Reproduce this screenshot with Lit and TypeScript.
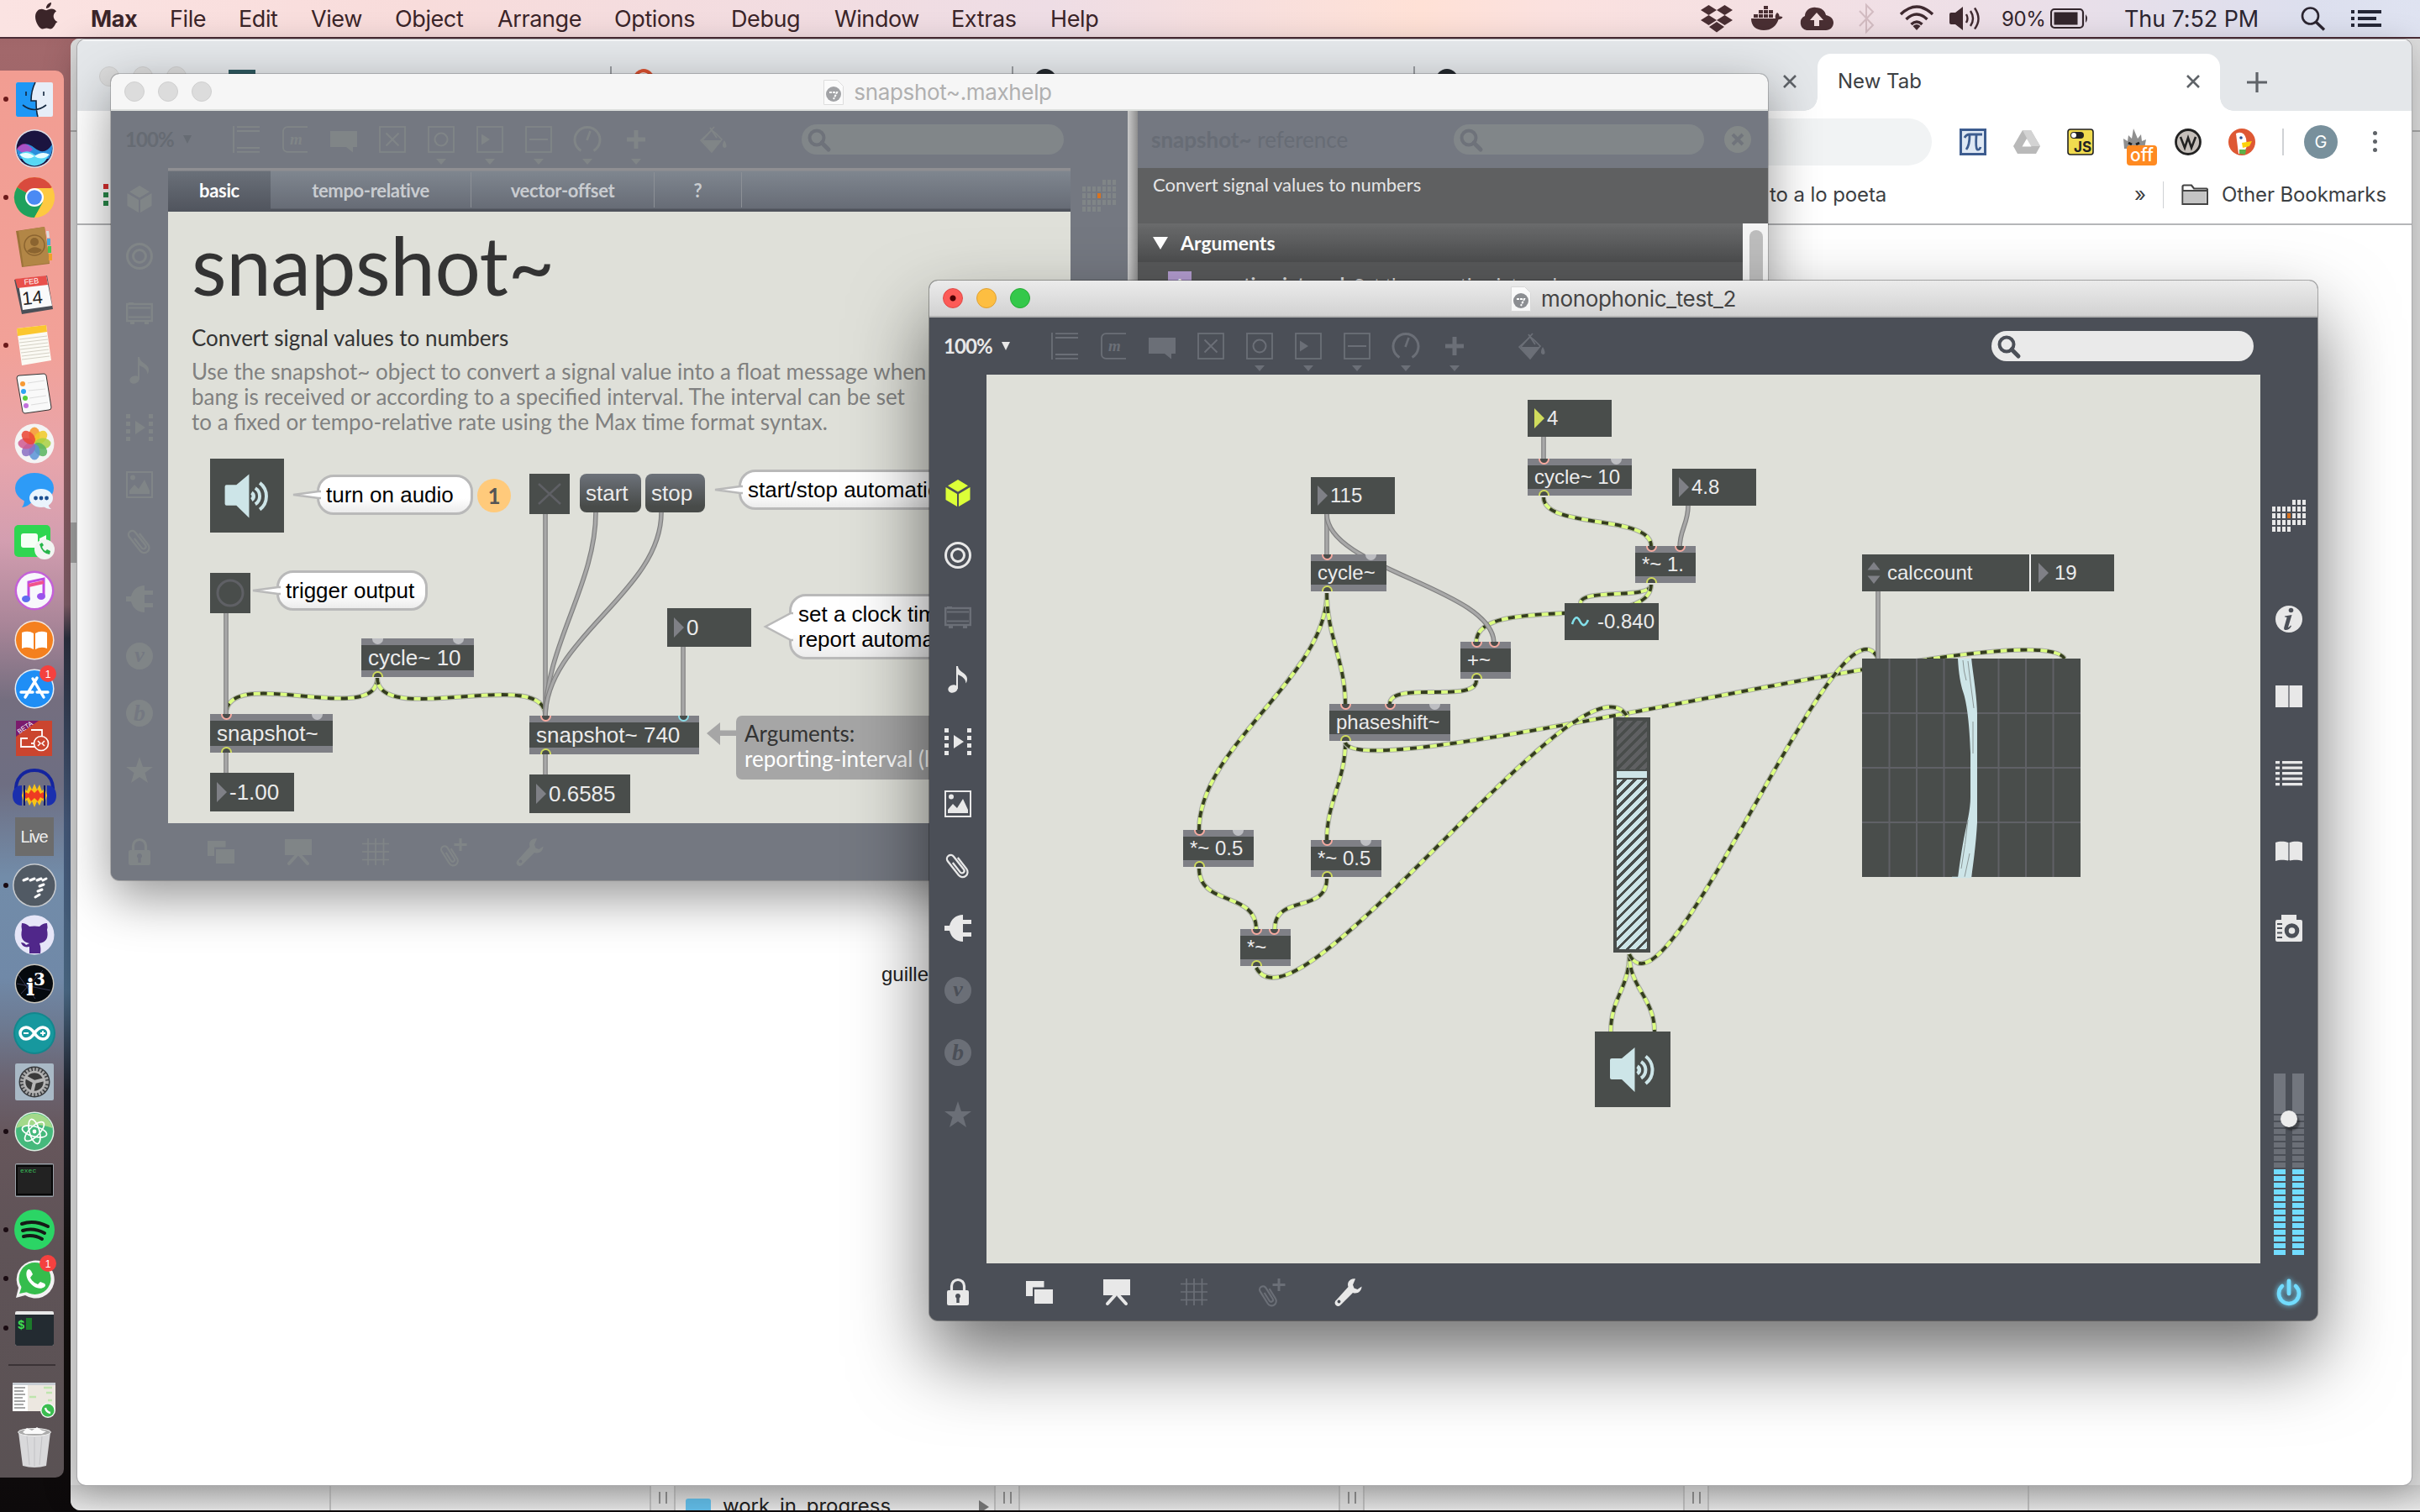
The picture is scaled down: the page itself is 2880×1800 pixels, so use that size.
import { LitElement, html, css, svg, nothing } from "lit";
import { styleMap } from "lit/directives/style-map.js";
import { classMap } from "lit/directives/class-map.js";

type Pt = [number, number];

/* ---------- toolbar glyphs, drawn on a 32 x 32 grid ---------- */

const frame = svg`<rect x="1" y="1" width="30" height="30" fill="none" stroke="currentColor" stroke-width="1.8"/>`;

const GLYPHS: Record<string, unknown> = {
  object: svg`<path d="M1 0v32M5 1.2h27M5 6h27M5 26h27M5 30.8h27" fill="none" stroke="currentColor" stroke-width="1.8"/>`,
  message: svg`<path d="M31 1.2H7a5 5 0 0 0-5 5v19.6a5 5 0 0 0 5 5h24" fill="none" stroke="currentColor" stroke-width="1.8"/>
    <text x="10" y="22" font-family="Liberation Serif, serif" font-style="italic" font-weight="700" font-size="19" fill="currentColor">m</text>`,
  comment: svg`<path d="M0 6h32v19h-5v6.500l-8-6.500H0z" fill="currentColor"/>`,
  toggle: svg`${frame}<path d="M8.500 8.500l15 15M23.500 8.500l-15 15" stroke="currentColor" stroke-width="2"/>`,
  button: svg`${frame}<circle cx="16" cy="16" r="7.500" fill="none" stroke="currentColor" stroke-width="2"/>`,
  number: svg`${frame}<path d="M6 9.500L16 16 6 22.500z" fill="currentColor"/>`,
  slider: svg`${frame}<path d="M5 16h22" stroke="currentColor" stroke-width="2"/>`,
  dial: svg`<path d="M8.500 29.500A15 15 0 1 1 23.500 29.500" fill="none" stroke="currentColor" stroke-width="3"/><path d="M15.500 17L19.500 6" stroke="currentColor" stroke-width="2.600"/>`,
  plus: svg`<path d="M16 5v22M5 16h22" stroke="currentColor" stroke-width="5"/>`,
  paint: svg`<path d="M12 2l8 12M17 1L3 17" fill="none" stroke="currentColor" stroke-width="1.800"/><path d="M1 17l13-12 4 3 8 8L14 31z" fill="none" stroke="currentColor" stroke-width="1.600"/><path d="M2 17h24L14 31z" fill="currentColor"/><path d="M29 17c3 5 3.500 9 .5 9s-3.500-4-.5-9z" fill="currentColor"/>`,
  cube: svg`<path d="M16 0l12 7.200L16 14.500 4 7.200zM1.500 9L15 17v15L1.500 24zM30.500 9L17 17v15l13.500-8z" fill="currentColor"/>`,
  target: svg`<circle cx="16" cy="16" r="14.500" fill="none" stroke="currentColor" stroke-width="3"/><circle cx="16" cy="16" r="7.500" fill="none" stroke="currentColor" stroke-width="3"/>`,
  device: svg`<rect x="1.200" y="5" width="29.600" height="20" fill="none" stroke="currentColor" stroke-width="2.400"/><path d="M3 9.500h26M3 20.500h26" stroke="currentColor" stroke-width="2"/><path d="M3 3h6v2H3zM5 26h5v3H5zM22 26h5v3h-5z" fill="currentColor"/>`,
  note: svg`<ellipse cx="10" cy="27" rx="5.800" ry="4.600" transform="rotate(-20 10 27)" fill="currentColor"/><path d="M14 27V0h2c0 7 11 8 11 15 0 2-.5 4-1.500 5.500C25.500 13 17 11 16 10v17z" fill="currentColor"/>`,
  steps: svg`<path d="M0 0h5v5H0zM0 9h5v5H0zM0 18h5v5H0zM0 27h5v5H0zM27 0h5v5h-5zM27 9h5v5h-5zM27 18h5v5h-5zM27 27h5v5h-5zM11 8l12 8-12 8z" fill="currentColor"/>`,
  image: svg`<rect x="1" y="1" width="30" height="30" fill="none" stroke="currentColor" stroke-width="2"/><circle cx="8" cy="7.500" r="3" fill="currentColor"/><path d="M4 27V23l6-7 5 5 7-11 6 13v4z" fill="currentColor"/>`,
  clip: svg`<g transform="rotate(-38 16 16)" fill="none" stroke="currentColor" stroke-width="2.300"><path d="M22 8v17a6 6 0 0 1-12 0V4a4.500 4.500 0 0 1 9 0V23.500a2.700 2.700 0 0 1-5.400 0V9"/></g>`,
  plug: svg`<path d="M0 13h6C8 5 14 0 22 0v6h10v5H22v10h10v5H22v6C14 32 8 27 6 19H0z" fill="currentColor"/>`,
  vizzie: svg`<circle cx="16" cy="16" r="16" fill="currentColor"/><text x="16" y="23" text-anchor="middle" class="cut" font-family="Liberation Serif, serif" font-style="italic" font-weight="700" font-size="26">v</text>`,
  beap: svg`<circle cx="16" cy="16" r="16" fill="currentColor"/><text x="16" y="25" text-anchor="middle" class="cut" font-family="Liberation Serif, serif" font-style="italic" font-weight="700" font-size="28">b</text>`,
  star: svg`<path d="M16 0l4 12h12l-9.500 7L26 31l-10-7-10 7 3.500-12L0 12h12z" fill="currentColor"/>`,
  lock: svg`<path d="M8.500 15V9a7.500 7.500 0 0 1 15 0v6" fill="none" stroke="currentColor" stroke-width="3.200"/><path d="M5 14h22a2 2 0 0 1 2 2v14a2 2 0 0 1-2 2H5a2 2 0 0 1-2-2V16a2 2 0 0 1 2-2z" fill="currentColor"/><path d="M16 18a3 3 0 0 1 1.700 5.500V29h-3.400v-5.500A3 3 0 0 1 16 18z" class="cut"/>`,
  windows: svg`<path d="M0 3h21.500v7.500H8V21H0z" fill="currentColor"/><path d="M10 13h22v17H10z" fill="currentColor"/>`,
  present: svg`<path d="M0 1h32v19H0z" fill="currentColor"/><path d="M14 20L5 30M18 20l9 10" stroke="currentColor" stroke-width="4" stroke-linecap="round"/>`,
  grid: svg`<path d="M7 0v32M16 0v32M25.500 0v32M0 6.500h32M0 16h32M0 25.500h32" stroke="currentColor" stroke-width="1.700"/>`,
  clipadd: svg`<g transform="translate(-4 3) rotate(-32 16 16)" fill="none" stroke="currentColor" stroke-width="2.100"><path d="M21 11v14a5.500 5.500 0 0 1-11 0V8a4 4 0 0 1 8 0V23.500a2.300 2.300 0 0 1-4.600 0V12"/></g><path d="M25 0v15M17.500 7.500h15" stroke="currentColor" stroke-width="3"/>`,
  wrench: svg`<path d="M24 .5c-6-1-10.500 4-8.500 9.500L1.500 25.500a4 4 0 1 0 5.500 5.500L21 17c5.500 2 10.500-2 10.500-7.500l-5 3.500-4-1.500-1.500-4z" fill="currentColor"/><circle cx="4.500" cy="27.500" r="1.900" class="cut"/>`,
  info: svg`<circle cx="16" cy="16" r="16" fill="currentColor"/><circle cx="18.500" cy="5.500" r="2.800" class="cut"/><path d="M11 12.500l8.500-1.500-4.500 15c.8 0 2-1 3-2.500l1 .7C17 28 14 29.500 11.500 29c-1.800-.5-1.500-2.500-1-4l3-10.500c.2-.8-1-1-2.500-1z" class="cut"/>`,
  columns: svg`<path d="M0 3h15v26H0zM17 3h15v26H17z" fill="currentColor"/><path d="M15 3h2v26h-2z" fill="currentColor" opacity=".4"/>`,
  list: svg`<path d="M0 1h5v3.200H0zM8 1h24v3.200H8zM0 7.500h5v3.200H0zM8 7.500h24v3.200H8zM0 14h5v3.200H0zM8 14h24v3.200H8zM0 20.500h5v3.200H0zM8 20.500h24v3.200H8zM0 27h5v3.200H0zM8 27h24v3.200H8z" fill="currentColor"/>`,
  book: svg`<path d="M0 6c4-1.800 11-1.800 15 0v21.500c-4-1-11-1-15 .5zM32 6c-4-1.800-11-1.800-15 0v21.500c4-1 11-1 15 .5z" fill="currentColor"/><path d="M15 6h2v21h-2z" fill="currentColor" opacity=".4"/>`,
  camera: svg`<path d="M7 0h18v6h5a2 2 0 0 1 2 2v22a2 2 0 0 1-2 2H2a2 2 0 0 1-2-2V8a2 2 0 0 1 2-2h5z" fill="currentColor"/><circle cx="19.500" cy="19" r="6.300" fill="none" class="cutline"/><path d="M2 11h6M2 16h6M2 21.500h6M2 27h6" class="cutline" style="stroke-width:2"/>`,
};

const glyph = (name: string, tone = "") =>
  html`<svg class="glyph ${tone}" viewBox="0 0 32 32">${GLYPHS[name]}</svg>`;

const speakerShape = svg`
  <path d="M18 34a2 2 0 0 1 2-2h12l15.500-13v53L32 57H20a2 2 0 0 1-2-2z" fill="#cde5e8"/>
  <g fill="none" stroke="#cde5e8" stroke-width="4">
    <path d="M50.500 41.500a5 5 0 0 1 0 8.600" stroke-width="4.500"/>
    <path d="M55 36a11.500 11.500 0 0 1 0 19.500"/>
    <path d="M60.500 29.500a20.500 20.500 0 0 1 0 32.500"/>
  </g>`;

/* ---------- patcher ---------- */

interface Port { x: number; kind: "hot" | "blue" | "free"; }
interface Node {
  kind: "object" | "number" | "signal-number" | "message" | "bubble" | "note" | "toggle" | "bang" | "speaker" | "gain" | "scope" | "attr" | "badge";
  x: number; y: number; w: number; h: number;
  text?: string; ins?: Port[]; outs?: number[]; lit?: boolean; tip?: number;
}
interface Cord { from: Pt; to: Pt; pull?: number; bend?: [Pt, Pt]; signal?: boolean; }

class PatchCanvas extends LitElement {
  static properties = {
    nodes: { attribute: false }, cords: { attribute: false },
    ox: { type: Number }, oy: { type: Number }, size: { type: Number },
  };
  declare nodes: Node[];
  declare cords: Cord[];
  declare ox: number;
  declare oy: number;
  declare size: number;

  constructor() {
    super();
    this.nodes = []; this.cords = []; this.ox = 0; this.oy = 0; this.size = 24;
  }

  static styles = css`
    :host { position: absolute; inset: 0; overflow: hidden; font-family: "Liberation Sans", Arial, sans-serif; }
    svg.cords { position: absolute; inset: 0; width: 100%; height: 100%; }
    .node { position: absolute; box-sizing: border-box; color: #ebebeb; white-space: pre; }
    .object { background: #494d4b; border: solid #7f8086; border-width: 8px 0; padding-left: 8px; display: flex; align-items: center; }
    .number, .signal-number { background: #494d4b; display: flex; align-items: center; padding-left: 8px; gap: 3px; }
    .signal-number { gap: 10px; }
    .tri { width: 0; height: 0; border: solid transparent; border-width: 12px 0 12px 12px; border-left-color: #7f8086; }
    .tri.lit { border-left-color: #d0dc5c; }
    .in, .out { position: absolute; width: 13px; height: 7px; box-sizing: border-box; background: #494d4b; border: 2px solid #f6aaa0; margin-left: -6.5px; }
    .in { top: -8px; border-top: 0; border-radius: 0 0 7px 7px; }
    .in.blue { border-color: #8adbe6; }
    .in.free { background: #bdbec2; border-color: #bdbec2; }
    .out { bottom: -8px; border-color: #d0dc5c; border-bottom: 0; border-radius: 7px 7px 0 0; }
    .message { background: linear-gradient(#6d727a, #484b49 85%); border-radius: 8px; display: flex; align-items: center; padding-left: 7px; }
    .bubble { background: linear-gradient(#fff 60%, #ececec); border: 3px solid #b9b9b9; border-radius: 20px; color: #000; padding-left: 8px; display: flex; align-items: center; line-height: 30px; }
    .bubble svg { position: absolute; right: 100%; top: 0; margin-right: -2px; }
    .note { background: #a6a6a6; border-radius: 7px; padding: 6px 10px; font: 26px/30px Lato, sans-serif; color: #fff; }
    .note .dark { color: #333; }
    .note svg { position: absolute; right: 100%; top: 8px; }
    .toggle, .bang, .speaker { background: #494d4b; }
    .toggle svg, .bang svg, .speaker svg { display: block; width: 100%; height: 100%; }
    .badge { background: #ffca7b; border-radius: 50%; color: #555; font: 700 26px Lato, sans-serif; display: flex; align-items: center; justify-content: center; }
    .gain { background: #494d4b; padding: 4px; display: flex; flex-direction: column; gap: 2px; }
    .gain .off { height: 58px; background: repeating-linear-gradient(135deg, #5f6062 0 5.500px, #494d4b 5.500px 8.500px); }
    .gain .knob { height: 8px; background: #cde5e8; }
    .gain .on { flex: 1; background: repeating-linear-gradient(135deg, #cde5e8 0 5.500px, #494d4b 5.500px 8.500px); }
    .attr { display: flex; gap: 2px; background: #f4f4f4; }
    .attr > div { background: #494d4b; display: flex; align-items: center; gap: 9px; padding-left: 6px; }
    .attr .name { width: 199px; box-sizing: border-box; gap: 8px; }
    .attr .value { flex: 1; padding-left: 9px; gap: 7px; }
    .scope { background: #494d4b; }
    .scope svg { display: block; overflow: visible; }
  `;

  private path(c: Cord) {
    const k = c.pull ?? 0;
    const [a, b] = c.bend ?? [[c.from[0], c.from[1] + k], [c.to[0], c.to[1] - k]] as [Pt, Pt];
    return `M${c.from}C${a} ${b} ${c.to}`;
  }

  private body(n: Node) {
    switch (n.kind) {
      case "object":
        return html`${(n.ins ?? []).map(p => html`<i class="in ${p.kind}" style=${styleMap({ left: `${p.x - n.x}px` })}></i>`)}${n.text}${(n.outs ?? []).map(x => html`<i class="out" style=${styleMap({ left: `${x - n.x}px` })}></i>`)}`;
      case "number":
        return html`<i class=${classMap({ tri: true, lit: !!n.lit })}></i>${n.text}`;
      case "signal-number":
        return html`<svg width="21" height="14" viewBox="0 0 21 14"><path d="M1 10C4 1 7 0 10 6s6 8 10-1" fill="none" stroke="#83e0ea" stroke-width="2.600"/></svg>${n.text}`;
      case "bubble": {
        const t = n.tip ?? 36, h = n.h > 60 ? 16 : 4, cy = n.h / 2 - 3;
        return html`<svg width=${t} height=${n.h} viewBox="0 0 ${t} ${n.h}"><path d="M${t} ${cy - h}H${t - 3}L3 ${cy}L${t - 3} ${cy + h}H${t}" fill="#fff" stroke="#b9b9b9" stroke-width="2.500"/></svg>${n.text}`;
      }
      case "note":
        return html`<svg width="35" height="28" viewBox="0 0 35 28"><path d="M0 13L16 0v9.500h19v6.500H16V27z" fill="#a6a6a6"/></svg><div class="dark">Arguments:</div><div>${n.text}</div>`;
      case "toggle":
        return html`<svg viewBox="0 0 48 48"><path d="M11 12l26 24M37 12L11 36" stroke="#5f6065" stroke-width="2.500"/></svg>`;
      case "bang":
        return html`<svg viewBox="0 0 48 48"><circle cx="24" cy="24" r="15" fill="none" stroke="#5f6065" stroke-width="3"/></svg>`;
      case "speaker":
        return html`<svg viewBox="0 0 90 90">${speakerShape}</svg>`;
      case "gain":
        return html`<div class="off"></div><div class="knob"></div><div class="on"></div>`;
      case "attr":
        return html`<div class="name"><svg width="16" height="28" viewBox="0 0 16 28"><path d="M8 1l7.500 9.500H.5zM8 27l7.500-9.500H.5z" fill="#7f8086"/></svg>${n.text}</div><div class="value"><i class="tri"></i>19</div>`;
      case "scope":
        return html`<svg width="260" height="260" viewBox="0 0 260 260">
          <path d=${[1, 2, 3, 4, 5, 6, 7].map(i => `M${i * 32.5} 0v260`).join("") + [1, 2, 3].map(i => `M0 ${i * 65}h260`).join("")} stroke="#606166" stroke-width="2"/>
          <path d="M114 0H130C133 24 137 48 137 66V195C136 215 133 240 130 261H114C116 245 118 232 121 215 125 195 129 180 129 165V112C128 80 125 55 121 42 117 30 115 18 114 0z" fill="#cde5e8"/>
          <path d="M120 2q1 14 4 24M126 3q3 26 7 56M132 75v38M126 192q-3 30-8 58M128 232l-6 28" fill="none" stroke="#8b9696" stroke-width="1"/>
          <path d="M107 260.500h22" stroke="#cde5e8" stroke-width="1.500"/>
        </svg>`;
      default:
        return n.text ?? nothing;
    }
  }

  render() {
    return html`
      <svg class="cords" viewBox=${`${this.ox} ${this.oy} ${this.clientWidth || 1} ${this.clientHeight || 1}`} preserveAspectRatio="none">
        ${this.cords.map(c => c.signal
          ? svg`<g fill="none"><path d=${this.path(c)} stroke="#a9aba6" stroke-width="6"/><path d=${this.path(c)} stroke="#dcff80" stroke-width="3.800"/><path d=${this.path(c)} stroke="#343c20" stroke-width="3.800" stroke-dasharray="8 8"/></g>`
          : svg`<g fill="none"><path d=${this.path(c)} stroke="#808080" stroke-width="5.600"/><path d=${this.path(c)} stroke="#a8a8a8" stroke-width="3.200"/></g>`)}
      </svg>
      ${this.nodes.map(n => html`<div class="node ${n.kind}" style=${styleMap({
        left: `${n.x - this.ox}px`, top: `${n.y - this.oy}px`, width: `${n.w}px`, height: `${n.h}px`,
        ...(n.kind === "note" || n.kind === "badge" ? {} : { fontSize: `${this.size}px` }),
      })}>${this.body(n)}</div>`)}`;
  }

  firstUpdated() { this.requestUpdate(); }
}
customElements.define("patch-canvas", PatchCanvas);

const hot = (x: number): Port => ({ x, kind: "hot" });
const free = (x: number): Port => ({ x, kind: "free" });

const MAIN_NODES: Node[] = [
  { kind: "number", x: 1818, y: 476, w: 100, h: 44, text: "4", lit: true },
  { kind: "object", x: 1818, y: 546, w: 124, h: 44, text: "cycle~ 10", ins: [hot(1837), free(1923)], outs: [1837] },
  { kind: "number", x: 1990, y: 558, w: 100, h: 44, text: "4.8" },
  { kind: "number", x: 1560, y: 568, w: 100, h: 44, text: "115" },
  { kind: "object", x: 1560, y: 660, w: 90, h: 44, text: "cycle~", ins: [hot(1579), free(1631)], outs: [1579] },
  { kind: "object", x: 1946, y: 650, w: 72, h: 44, text: "*~ 1.", ins: [hot(1965), hot(1999)], outs: [1965] },
  { kind: "signal-number", x: 1862, y: 718, w: 112, h: 44, text: "-0.840" },
  { kind: "object", x: 1738, y: 764, w: 60, h: 44, text: "+~", ins: [hot(1757), hot(1778)], outs: [1757] },
  { kind: "object", x: 1582, y: 838, w: 144, h: 44, text: "phaseshift~", ins: [hot(1601), hot(1654), free(1707)], outs: [1601] },
  { kind: "object", x: 1408, y: 988, w: 84, h: 44, text: "*~ 0.5", ins: [hot(1427), free(1473)], outs: [1427] },
  { kind: "object", x: 1560, y: 1000, w: 84, h: 44, text: "*~ 0.5", ins: [hot(1579), free(1625)], outs: [1579] },
  { kind: "object", x: 1476, y: 1106, w: 60, h: 44, text: "*~", ins: [hot(1495), hot(1516)], outs: [1495] },
  { kind: "gain", x: 1920, y: 854, w: 44, h: 280 },
  { kind: "speaker", x: 1898, y: 1228, w: 90, h: 90 },
  { kind: "attr", x: 2216, y: 660, w: 300, h: 44, text: "calccount" },
  { kind: "scope", x: 2216, y: 784, w: 260, h: 260 },
];

const MAIN_CORDS: Cord[] = [
  { from: [1837, 520], to: [1837, 548] },
  { from: [1579, 612], to: [1579, 662] },
  { from: [1837, 592], to: [1965, 650], pull: 38, signal: true },
  { from: [1965, 696], to: [1881, 718], pull: 18, signal: true },
  { from: [1965, 696], to: [1757, 764], pull: 58, signal: true },
  { from: [1757, 810], to: [1654, 838], pull: 28, signal: true },
  { from: [1579, 706], to: [1427, 988], pull: 100, signal: true },
  { from: [1579, 706], to: [1601, 838], pull: 50, signal: true },
  { from: [1601, 884], to: [1579, 1000], pull: 45, signal: true },
  { from: [1601, 884], to: [2457, 784], bend: [[1620, 940], [2420, 725]], signal: true },
  { from: [1427, 1034], to: [1495, 1106], pull: 45, signal: true },
  { from: [1579, 1046], to: [1517, 1106], pull: 42, signal: true },
  { from: [1495, 1152], to: [1937, 854], bend: [[1545, 1245], [1887, 759]], signal: true },
  { from: [1939, 1136], to: [1917, 1228], pull: 40, signal: true },
  { from: [1939, 1136], to: [1969, 1228], pull: 40, signal: true },
  { from: [1939, 1136], to: [2235, 784], bend: [[1985, 1230], [2190, 690]], signal: true },
  { from: [2009, 602], to: [1999, 652], pull: 22 },
  { from: [1579, 612], to: [1778, 766], pull: 65 },
  { from: [2235, 704], to: [2235, 786] },
];

const HELP_NODES: Node[] = [
  { kind: "speaker", x: 250, y: 546, w: 88, h: 88 },
  { kind: "bubble", x: 377, y: 565, w: 186, h: 48, text: "turn on audio" },
  { kind: "badge", x: 568, y: 570, w: 40, h: 40, text: "1" },
  { kind: "toggle", x: 630, y: 564, w: 48, h: 48 },
  { kind: "message", x: 690, y: 564, w: 73, h: 46, text: "start" },
  { kind: "message", x: 768, y: 564, w: 71, h: 46, text: "stop" },
  { kind: "bubble", x: 879, y: 559, w: 500, h: 48, text: "start/stop automatic reporting" },
  { kind: "bang", x: 250, y: 682, w: 48, h: 48 },
  { kind: "bubble", x: 329, y: 679, w: 180, h: 48, text: "trigger output" },
  { kind: "number", x: 794, y: 724, w: 100, h: 46, text: "0" },
  { kind: "bubble", x: 939, y: 707, w: 500, h: 78, text: "set a clock time to\nreport automatically" },
  { kind: "object", x: 430, y: 760, w: 134, h: 46, text: "cycle~ 10", ins: [free(449), free(545)], outs: [449] },
  { kind: "object", x: 250, y: 850, w: 146, h: 46, text: "snapshot~", ins: [hot(269), free(377)], outs: [269] },
  { kind: "object", x: 630, y: 852, w: 202, h: 46, text: "snapshot~ 740", ins: [hot(649), { x: 813, kind: "blue" }], outs: [649] },
  { kind: "number", x: 250, y: 920, w: 100, h: 46, text: "-1.00" },
  { kind: "number", x: 630, y: 922, w: 120, h: 46, text: "0.6585" },
  { kind: "note", x: 876, y: 852, w: 500, h: 76, text: "reporting-interval (long)" },
];

const HELP_CORDS: Cord[] = [
  { from: [449, 807], to: [269, 850], pull: 60, signal: true },
  { from: [449, 807], to: [649, 852], pull: 60, signal: true },
  { from: [269, 730], to: [269, 852] },
  { from: [649, 612], to: [649, 854] },
  { from: [709, 610], to: [649, 854], pull: 85 },
  { from: [787, 610], to: [649, 854], pull: 95 },
  { from: [813, 770], to: [813, 854] },
  { from: [269, 896], to: [269, 920] },
  { from: [649, 898], to: [649, 922] },
];

/* ---------- dock ---------- */

const badge = svg`<circle cx="40" cy="6" r="10" fill="#f4413f"/><text x="40" y="10.500" font-size="12" fill="#fff" text-anchor="middle">1</text>`;

const DOCK: { art: unknown; open?: boolean }[] = [
  { open: true, art: svg`<rect x="2" y="4" width="44" height="41" rx="2" fill="#e6eef8"/><path d="M2 6a2 2 0 0 1 2-2h21c-4 8-5 14-5 22h6c0 7 0 13 2 19H4a2 2 0 0 1-2-2z" fill="#1e97f5"/><path d="M14 15v5M35 15v5M10 31q14 11 28 0M25 4c-4 8-5 14-5 22h6c0 7 0 13 2 19" fill="none" stroke="#12263e" stroke-width="1.600"/>` },
  { art: svg`<circle cx="24" cy="24" r="23" fill="#dcdfe8"/><circle cx="24" cy="24" r="21.500" fill="#1b1440"/><path d="M3 25q9-12 21-2t21-4q1 10-4 17H7q-4-5-4-11z" fill="#2b8fdc"/><path d="M3 24q9-12 19 1-9 9-19-1z" fill="#d33fc0" opacity=".75"/><path d="M7 30q8-6 17 1t17-1q-3 13-17 14.500Q10 43 7 30z" fill="#59d7f4"/><path d="M6 31q9-5 18 2-9 6-18-2zM24 33q9-7 18-2-9 8-18 2z" fill="#e6fdff"/>` },
  { open: true, art: svg`<circle cx="24" cy="24" r="24" fill="#fdc941"/><path d="M24 24L3.200 12A24 24 0 0 1 44.800 12z" fill="#d94a3d"/><path d="M24 24L3.200 12A24 24 0 0 0 24 48l10-18z" fill="#1fa15d"/><path d="M24 13h21A24 24 0 0 1 24 48l10-18z" fill="#fdc941"/><circle cx="24" cy="24" r="11" fill="#fff"/><circle cx="24" cy="24" r="8.800" fill="#4a8af4"/>` },
  { art: svg`<path d="M2 5l34-5 6 44-33 4z" fill="#9c7339"/><path d="M5 5l31-5 6 43-31 4z" fill="#b28646"/><circle cx="24" cy="22" r="12" fill="none" stroke="#8b6430" stroke-width="1.500"/><circle cx="24" cy="18" r="5" fill="#8b6430"/><path d="M15 29q9-9 18-1-8 7-18 1z" fill="#8b6430"/><path d="M38 5l3 0 1 8-3 0z" fill="#ddd"/><path d="M39 14h4v8h-4z" fill="#4aa9de"/><path d="M40 23h4v8h-4z" fill="#45c554"/><path d="M41 32h4v8h-4z" fill="#f1a02c"/>` },
  { art: svg`<path d="M0 5l39-5 7 40-37 6z" fill="#4b4f57"/><path d="M4 4l34-4 7 36-35 5z" fill="#fafafa"/><path d="M1 4l37-4 2 11-36 4z" fill="#e8504b"/><text x="12" y="11" font-size="9" fill="#fff" transform="rotate(-6 12 11)">FEB</text><text x="10" y="35" font-size="22" fill="#222" transform="rotate(-6 12 35)">14</text>` },
  { open: true, art: svg`<path d="M3 4l35-4 6 42-35 6z" fill="#fbfaf4"/><path d="M3 4l35-4 1 8-35 5z" fill="#fbc72f"/><path d="M6 17l33-4M6 21l34-4M7 25l33-4M7 29l34-4M8 33l33-4M9 37l33-4M9 41l33-4" stroke="#cfccc0" stroke-width=".9"/>` },
  { art: svg`<path d="M3 5a3 3 0 0 1 3-3l29-2a3 3 0 0 1 3 2l6 38a3 3 0 0 1-3 3L13 47a3 3 0 0 1-3-2z" fill="#f9f9f9" stroke="#333" stroke-width="1"/><path d="M16 11l20-3M17 20l20-2M18 29l20-3M20 37l20-3" stroke="#ddd"/><circle cx="10" cy="12" r="3" fill="#f79a35"/><circle cx="11" cy="21" r="3" fill="#2ea4f3"/><circle cx="13" cy="29" r="3" fill="#58cf3c"/><circle cx="14" cy="38" r="3" fill="#c26fdc"/>` },
  { art: svg`<circle cx="24" cy="24" r="23.500" fill="#f4f4f4"/>${["#f6952a", "#f0c928", "#a9d142", "#58b45f", "#5b93d6", "#8a6fc2", "#cf5a90", "#ea4634"].map((c, i) => svg`<ellipse cx="24" cy="14" rx="6.500" ry="9.500" fill=${c} opacity=".86" transform="rotate(${i * 45} 24 24)"/>`)}` },
  { art: svg`<ellipse cx="24" cy="19" rx="23" ry="18" fill="#2d9bf7"/><path d="M12 32q0 7-3 10 8-1 12-7z" fill="#2d9bf7"/><ellipse cx="32" cy="31" rx="14" ry="11" fill="#eaf4fd"/><path d="M40 38q1 4 4 6-6 0-9-3z" fill="#eaf4fd"/><circle cx="25.500" cy="31" r="2.400" fill="#1d4f91"/><circle cx="32" cy="31" r="2.400" fill="#1d4f91"/><circle cx="38.500" cy="31" r="2.400" fill="#1d4f91"/>` },
  { art: svg`<rect x="0" y="4" width="43" height="38" rx="5" fill="#2fd651"/><rect x="8" y="14" width="20" height="17" rx="3" fill="#f5fff5"/><path d="M30 20l8-4v14l-8-4z" fill="#f5fff5"/><circle cx="36" cy="33" r="12" fill="#f2f5f2"/><path d="M30 27q3 11 12 12l1-4-4-2-2 2q-3-2-4-5l2-2-2-3z" fill="#28b54b"/>` },
  { art: svg`<circle cx="24" cy="24" r="23.500" fill="#c461d8"/><circle cx="24" cy="24" r="21" fill="#f8f8fc"/><path d="M17 34V14l18-4v20" fill="none" stroke="#c04ae0" stroke-width="3"/><path d="M17 18l18-4" stroke="#f0538c" stroke-width="4"/><ellipse cx="14" cy="34" rx="5" ry="4" fill="#5f6df0"/><ellipse cx="32" cy="31" rx="5" ry="4" fill="#9a54ec"/>` },
  { art: svg`<circle cx="24" cy="24" r="23.500" fill="#f5e8df"/><circle cx="24" cy="24" r="22" fill="#f4801f"/><path d="M9 15q8-3 14 1v19q-7-4-14-1zM39 15q-8-3-14 1v19q7-4 14-1z" fill="#fff"/>` },
  { art: svg`<circle cx="24" cy="24" r="23.500" fill="#e5eef6"/><circle cx="24" cy="24" r="22" fill="#1f8ef5"/><path d="M13 34L27 11M35 34L22 12M8 28h14M27 28h13" stroke="#fff" stroke-width="3.400" stroke-linecap="round"/>${badge}` },
  { art: svg`<rect x="2" y="3" width="43" height="42" fill="#cb452f"/><path d="M2 3h27L2 22z" fill="#7b1b6c"/><text x="6" y="19" font-size="8" fill="#fff" transform="rotate(-35 6 19)">BETA</text><path d="M15 34H8V24h8M20 14h13v8M20 30h7M10 34h17" fill="none" stroke="#fff" stroke-width="1.800"/><circle cx="32" cy="30" r="8.500" fill="#cb452f" stroke="#fff" stroke-width="1.600"/><path d="M28 27l3 3-3 3M36 27l-3 3 3 3" fill="none" stroke="#fff" stroke-width="1.500"/>` },
  { art: svg`<path d="M2 32C0 12 12 4 24 4s24 8 22 28" fill="none" stroke="#14249e" stroke-width="4"/><path d="M9 34l3-9 3 4 3-8 3 6 3-7 3 7 3-6 3 8 3-4 3 9-3 9-3-4-3 7-3-5-3 7-3-7-3 5-3-7-3 4z" fill="#f9c316"/><path d="M11 34l3-4 3 2 3-5 4 4 4-4 3 5 3-2 3 4-3 4-3-2-3 5-4-4-4 4-3-5-3 2z" fill="#ee3b22"/><path d="M9 22v24C1 46-2 40-2 34s3-12 11-12zM39 22v24c8 0 11-6 11-12s-3-12-11-12z" fill="#1a2fae"/><path d="M12 22v24M36 22v24" stroke="#0c1766" stroke-width="2"/>` },
  { art: svg`<rect x="1" y="1" width="46" height="46" fill="#6c6c6c"/><text x="24" y="31" font-size="20" fill="#eee" text-anchor="middle" textLength="33">Live</text>` },
  { open: true, art: svg`<circle cx="24" cy="24" r="26" fill="#c9ccd0"/><circle cx="24" cy="24" r="24.500" fill="#515a64"/><path d="M11 18l5-2M19 18l5-2M27 18l5-2M34 18l4-2M30 25l5-2M28 31l5-2M25 38l5-3" stroke="#fff" stroke-width="3" stroke-linecap="round"/>` },
  { art: svg`<circle cx="24" cy="24" r="23.500" fill="#e6e6f8"/><path d="M9 10q5 0 9 4 6-1 12 0 4-4 9-4 1 5 0 8 3 14-9 16 2 5 1 12H18V38q-8 2-10-5 4 0 6 3l4-2Q6 32 9 18q-1-4 0-8z" fill="#50278a"/>` },
  { art: svg`<circle cx="24" cy="24" r="23.500" fill="#c9c6be"/><circle cx="24" cy="24" r="22" fill="#060a0e"/><path d="M5 14l20 28M8 36L34 8M3 24l40 8" stroke="#446" stroke-width=".8"/><text x="14" y="38" font-family="DejaVu Serif, serif" font-size="27" font-weight="700" fill="#fff">i</text><text x="23" y="26" font-family="DejaVu Serif, serif" font-size="20" font-weight="700" fill="#fff">3</text>` },
  { art: svg`<circle cx="24" cy="24" r="25" fill="#12878d"/><circle cx="24" cy="24" r="23" fill="#17989e"/><path d="M24 24c-4-6-7-7-10-7a7 7 0 0 0 0 14c3 0 6-1 10-7s7-7 10-7a7 7 0 0 1 0 14c-3 0-6-1-10-7z" fill="none" stroke="#fff" stroke-width="3.600"/><path d="M11 24h6M31 24h6M34 21v6" stroke="#fff" stroke-width="1.800"/>` },
  { art: svg`<rect x="1" y="2" width="46" height="44" rx="2" fill="#a9b9c6"/><circle cx="24" cy="24" r="18.500" fill="#36383b"/><circle cx="24" cy="24" r="15" fill="none" stroke="#a5a5a5" stroke-width="4" stroke-dasharray="2.600 1.400"/><circle cx="24" cy="24" r="12" fill="#3a3a3a" stroke="#b5b5b5" stroke-width="2.600"/><path d="M24 24L13 18M24 24l12-3M24 24l-3 13" stroke="#b5b5b5" stroke-width="4"/>` },
  { open: true, art: svg`<circle cx="24" cy="24" r="23.500" fill="#dcefe2"/><circle cx="24" cy="24" r="22" fill="#45b97c"/><path d="M2.500 20a22 22 0 0 1 43 0q-21-8-43 0z" fill="#a3d98a"/><g fill="none" stroke="#fff" stroke-width="1.700"><ellipse cx="24" cy="24" rx="15" ry="6" transform="rotate(15 24 24)"/><ellipse cx="24" cy="24" rx="15" ry="6" transform="rotate(75 24 24)"/><ellipse cx="24" cy="24" rx="15" ry="6" transform="rotate(135 24 24)"/></g><circle cx="24" cy="24" r="2.400" fill="#fff"/>` },
  { art: svg`<rect x="1" y="4" width="46" height="40" rx="2" fill="#9aa1a8"/><rect x="2" y="5.500" width="44" height="37" fill="#060606"/><rect x="4" y="8" width="40" height="32" fill="#222"/><text x="7" y="15" font-size="8" fill="#38c05a" font-family="Liberation Mono, monospace">exec</text>` },
  { open: true, art: svg`<circle cx="24" cy="24" r="24" fill="#2bd565"/><path d="M9 17q15-5 31 3M10 25q13-4 26 3M11 32q12-3 22 3" fill="none" stroke="#151a17" stroke-width="4" stroke-linecap="round"/>` },
  { open: true, art: svg`<path d="M2 47l3-12A22.500 22.500 0 1 1 13 44z" fill="#f2f2f2"/><circle cx="24.500" cy="24" r="19" fill="#35bd4c"/><path d="M6 42l3-9 7 7z" fill="#35bd4c"/><path d="M15 15q2-4 5 0l2 4-3 4q3 6 9 8l3-3 5 2q2 2 0 4c-9 7-25-8-21-19z" fill="#fff"/>${badge}` },
  { open: true, art: svg`<rect x="1" y="4" width="46" height="41" rx="2" fill="#e8e8e8"/><path d="M1 8h46v35a2 2 0 0 1-2 2H3a2 2 0 0 1-2-2z" fill="#232b31"/><text x="4" y="25" font-size="14" font-weight="700" fill="#3fe052" font-family="Liberation Mono, monospace">$</text><rect x="14" y="12" width="7" height="14" fill="#1c7a2b"/>` },
];

/* ---------- desktop ---------- */

const TOOLS: [string, boolean][] = [
  ["object", false], ["message", false], ["comment", false], ["toggle", false], ["button", true],
  ["number", true], ["slider", true], ["dial", true], ["plus", true],
];
const LEFT = ["cube", "target", "device", "note", "steps", "image", "clip", "plug", "vizzie", "beap", "star"];
const DIM_LEFT = new Set(["device", "vizzie", "beap", "star"]);
const BOTTOM = ["lock", "windows", "present", "grid", "clipadd", "wrench"];

const launchpad = () => {
  const cells: unknown[] = [];
  for (let r = 0; r < 5; r++)
    for (let c = 0; c < 7; c++) {
      if ((r === 0 && c < 4) || (r === 4 && c > 3)) continue;
      cells.push(svg`<rect x=${c * 6} y=${r * 8} width="4" height="6" fill=${r === 2 && c === 3 ? "#d97320" : "currentColor"}/>`);
    }
  return html`<svg class="pad" viewBox="0 0 40 38">${cells}</svg>`;
};

const magnifier = html`<svg class="mag" viewBox="0 0 30 30"><circle cx="12" cy="12" r="8.500" fill="none" stroke="currentColor" stroke-width="4"/><path d="M18 18l8 8" stroke="currentColor" stroke-width="5" stroke-linecap="round"/></svg>`;

const fileIcon = html`<svg class="file" viewBox="0 0 24 30"><path d="M.5.500h16l7 7v22H.5z" fill="#fff" fill-opacity=".8" stroke="#d8d8d8"/><circle cx="12" cy="17" r="9" fill="#8c8e92"/><path d="M7 15h9l-4 8" fill="none" stroke="#fff" stroke-width="2" stroke-dasharray="3 1"/></svg>`;

class AppRoot extends LitElement {
  static styles = css`
    :host { display: block; position: relative; width: 2880px; height: 1800px; overflow: hidden; font-family: Inter, "Liberation Sans", sans-serif; color: #222;
      background: linear-gradient(#9a5f62 0, #a2686b 60px, #8d5a5e 500px, #7d5c66 720px, #2c303e 760px, #45597a 980px, #4b6985 1180px, #20222c 1300px, #15110f 1500px, #0d0a0b 1800px); }
    .menubar { height: 44px; display: flex; position: relative; justify-content: space-between; border-bottom: 2px solid #4b2d36; font-size: 27px; line-height: 46px; color: #3b2529; letter-spacing: -0.4px;
      background: linear-gradient(90deg, #fbe3e2 0, #f8dcdb 500px, #eedde5 1250px, #f8dfdd 1500px, #ffe1d6 1690px, #fbe1df 1850px, #ecdfe8 2400px, #dcdfee 2750px, #dfe3f1); }
    .menubar svg { display: block; }
    .menus { display: grid; grid-template-columns: 67px 94px 82px 86px 100px 122px 139px 139px 123px 139px 118px 100px; padding-left: 41px; }
    .menus b { font-weight: 700; }
    .status { display: grid; grid-template-columns: 60px 57px 71px 48px 60px 62px 58px 88px 210px 60px 82px; color: #33262d; align-items: center; }
    .status > * { height: 44px; }
    .status .level { font-size: 24px; }
    .status .clock { color: #2b2530; letter-spacing: -0.1px; }
    .win { position: absolute; overflow: visible; }

    .finder { left: 84px; top: 46px; width: 2810px; height: 1752px; background: #dcdcdc; border-radius: 10px 10px 10px 12px; display: flex; flex-direction: column; justify-content: space-between; overflow: hidden; }
    .finder .top { height: 109px; border-bottom: 2px solid #a8a8a8; background: #dedede; }
    .finder .track { width: 8px; margin-top: 465px; height: 48px; background: #a5a5a5; }
    .finder .cols { height: 30px; margin-top: auto; display: flex; background: linear-gradient(#cbcbcb, #e6e6e6); font-size: 24px; color: #222; overflow: hidden; }
    .finder .cols > div { width: 381px; flex: none; box-sizing: border-box; border-right: 2px solid #bdbdbd; display: flex; overflow: hidden; }
    .finder .cols > .lead { width: 310px; }
    .finder .cols > .handle { width: 29px; justify-content: center; gap: 6px; background: #dcdcdc; }
    .handle i { width: 2px; height: 14px; margin-top: 8px; background: #8f8f8f; }
    .folder-row { padding: 10px 0 0 12px; display: flex; flex: 1; gap: 14px; line-height: 30px; }
    .folder-row i { width: 30px; height: 24px; margin-top: 6px; background: #62bde8; border-radius: 3px; }
    .folder-row b { margin: 8px 6px 0 auto; border: solid transparent; border-width: 8px 0 8px 12px; border-left-color: #777; height: 0; }

    .chrome { left: 92px; top: 47px; width: 2778px; height: 1721px; border-radius: 10px; background: #fff; box-shadow: 0 0 0 1px #a9a9ab, 0 10px 40px rgba(0, 0, 0, .25); display: flex; flex-direction: column; overflow: hidden; }
    .strip { height: 85px; background: #e4e7ea; display: flex; position: relative; box-shadow: inset 0 2px #f4f5f6; }
    .lights { display: flex; gap: 16px; }
    .lights i { width: 24px; height: 24px; border-radius: 50%; box-sizing: border-box; background: #dcdcdc; border: 1.500px solid #cfcfcf; }
    .strip .lights { margin: 32px 0 0 26px; }
    .favs { position: absolute; left: 180px; top: 32px; }
    .strip .x { margin: 41px 0 0 1899px; }
    .tab { margin: 17px 0 0 24px; width: 479px; height: 68px; background: #fff; border-radius: 16px 16px 0 0; display: flex; align-items: center; justify-content: space-between; box-sizing: border-box; padding: 0 23px 3px 24px; font-size: 24px; color: #3c4043; position: relative; }
    .tab::before, .tab::after { content: ""; position: absolute; bottom: 0; width: 16px; height: 16px; }
    .tab::before { left: -16px; background: radial-gradient(circle at 0 0, transparent 15.500px, #fff 16px); }
    .tab::after { right: -16px; background: radial-gradient(circle at 100% 0, transparent 15.500px, #fff 16px); }
    .strip .add { margin: 39px 0 0 32px; }
    .addr { height: 73px; display: flex; align-items: center; position: relative; }
    .addr .omni { margin-left: 140px; width: 2067px; height: 56px; border-radius: 28px; background: #f1f3f4; }
    .addr .ext { margin-left: 33px; display: flex; gap: 32px; margin-top: 1px; }
    .addr .ext svg { width: 32px; height: 32px; overflow: visible; }
    .addr .bar { width: 2px; height: 32px; background: #d0d2d5; margin: 0 24px 0 32px; }
    .avatar { width: 40px; height: 40px; border-radius: 50%; background: #78909c; color: #fff; font-size: 20px; line-height: 40px; text-align: center; }
    .dots { display: flex; flex-direction: column; gap: 5px; margin-left: 42px; }
    .dots i { width: 5px; height: 5px; border-radius: 50%; background: #5f6368; }
    .marks { height: 61px; border-bottom: 2px solid #b5b6b8; display: flex; font-size: 24px; line-height: 54px; color: #3c4043; letter-spacing: -0.1px; }
    .marks .apps { width: 6px; margin: 14px 0 0 31px; display: grid; grid-auto-rows: 6px; gap: 4px; }
    .marks .apps i { background: #2a8a4a; } .marks .apps i:first-child { background: #d93030; }
    .marks .last { margin-left: 1977px; width: 434px; }
    .marks .sep { width: 1px; height: 32px; background: #cfd1d4; margin: 11px 21px 0 20px; }
    .marks svg { margin: 14px 16px 0 0; }
    .page { position: relative; flex: 1; }
    .page p { position: absolute; left: 957px; top: 877px; margin: 0; font: 24px/30px "Liberation Sans", sans-serif; color: #222; }

    .max { display: flex; flex-direction: column; border-radius: 10px 10px 10px 10px; overflow: hidden; }
    .title { height: 44px; box-sizing: border-box; display: flex; align-items: center; padding-left: 16px; position: relative; }
    .title .name { position: absolute; inset: 0; display: flex; align-items: center; justify-content: center; gap: 12px; font-size: 26px; letter-spacing: -0.35px; padding-top: 1px; }
    .title .file { width: 24px; height: 30px; }
    .help { left: 132px; top: 88px; width: 1972px; height: 960px; box-shadow: 0 0 0 1px rgba(0, 0, 0, .18), 0 20px 60px rgba(0, 0, 0, .42); background: #747881; --chrome: #747881; --tool: #808587; --icon: #808587; --dim: #808587; }
    .help .title { background: #f6f6f6; border-bottom: 2px solid #dcdfdc; color: #b0b0b0; }
    .help .title .name { padding-right: 4px; }
    .help .title .file { opacity: .8; }
    .main { left: 1106px; top: 334px; width: 1652px; height: 1238px; box-shadow: 0 0 0 1px rgba(0, 0, 0, .3), 0 44px 90px rgba(0, 0, 0, .56); background: #4b4f57; --chrome: #4b4f57; --tool: #6b6f77; --icon: #e8e8e8; --dim: #6b6f77; }
    .main .title { background: linear-gradient(#ebebeb, #d2d2d2); border-bottom: 2px solid #b4b4b4; color: #444; }
    .main .lights i:nth-child(1) { background: radial-gradient(circle, #4e0002 3px, #fc5b57 4px); border-color: #df4744; }
    .main .lights i:nth-child(2) { background: #fdbe41; border-color: #dea034; }
    .main .lights i:nth-child(3) { background: #34c84a; border-color: #27aa35; }
    .cols2 { display: flex; flex: 1; min-height: 0; }
    .patcher { flex: 1; display: grid; grid-template: 68px 1fr 68px / 68px 1fr 68px; background: var(--chrome); }
    .glyph { width: 32px; height: 32px; display: block; color: var(--icon); overflow: visible; flex: none; }
    .glyph.dim { color: var(--dim); } .glyph.tool { color: var(--tool); } .glyph.lime { color: #dcff38; }
    .help .glyph.lime { color: var(--icon); }
    .cut { fill: var(--chrome); } .cutline { stroke: var(--chrome); stroke-width: 5; }
    .toolbar { grid-column: 1 / 4; display: flex; padding: 18px 0 0 17px; color: var(--icon); }
    .help .toolbar { color: #666b73; }
    .zoom { width: 128px; display: flex; gap: 11px; font: 700 24px/31px Lato, sans-serif; letter-spacing: -0.9px; }
    .zoom i { margin-top: 11px; height: 0; border: solid transparent; border-width: 10px 5.500px 0; border-top-color: currentColor; }
    .tools { display: flex; gap: 26px; }
    .tools > div { height: 50px; display: flex; flex-direction: column; align-items: center; gap: 7px; }
    .tools b { width: 0; height: 0; border: solid transparent; border-width: 7px 6.500px 0; border-top-color: var(--tool); }
    .paint { margin-left: 60px; }
    .search { margin-left: auto; margin-top: -2px; width: 312px; height: 36px; border-radius: 18px; background: #eaeaea; color: #4b4f57; box-sizing: border-box; padding: 4px 6px; }
    .patcher .search { margin-right: 76px; }
    .help .search { background: #818689; color: #6e727a; }
    .mag { width: 30px; height: 30px; display: block; }
    .left { grid-row: 2 / 3; display: flex; flex-direction: column; align-items: center; }
    .main .left { gap: 42px; padding-top: 125px; }
    .help .left { gap: 36px; padding-top: 21px; }
    .canvas { position: relative; background: #dfe0d9; overflow: hidden; }
    .right { display: flex; flex-direction: column; align-items: center; }
    .pad { width: 40px; height: 38px; color: var(--icon); flex: none; }
    .main .right { padding-top: 149px; gap: 60px; }
    .main .right .pad { margin-bottom: 28px; }
    .help .right { padding-top: 14px; }
    .meters { display: flex; gap: 8px; position: relative; margin-top: 97px; }
    .meters > div { width: 14px; height: 216px; background: linear-gradient(#72767e 48px, transparent 48px), repeating-linear-gradient(transparent 0 2px, #6b6f77 2px 8px); position: relative; }
    .meters > div::after { content: ""; position: absolute; inset: 112px 0 0; background: repeating-linear-gradient(var(--chrome) 0 2px, #72dcff 2px 8px); }
    .meters u { position: absolute; left: 8px; top: 44px; width: 20px; height: 20px; border-radius: 50%; background: #ececec; box-shadow: 3px 4px 2px rgba(0, 0, 0, .35); }
    .bottom { grid-column: 1 / 4; display: flex; align-items: center; padding: 0 17px 0 18px; gap: 60px; }
    .bottom .glyph:first-child { margin-right: 5px; }
    .bottom .power { margin-left: auto; width: 34px; height: 36px; margin-top: 1px; filter: drop-shadow(0 0 3px #72dcff); }
    .tabs { height: 52px; display: flex; background: linear-gradient(#8f8f92 0 3px, #7f868f 4px, #676c76 48px, #4f535c 49px 52px); font: 700 22px/54px Lato, sans-serif; color: #c9ccd0; letter-spacing: -0.35px; position: relative; }
    .tabs div { text-align: center; border-right: 1px solid #8c9096; margin: 5px 0 5px; line-height: 43px; box-sizing: border-box; }
    .tabs div:first-child { margin: 0; line-height: 53px; background: linear-gradient(#8f8f92 0 3px, #6a7079 4px, #50545d); color: #fff; border: 0; }
    .help .canvas.doc { display: block; grid-column: 2; }
    .doc .sheet { position: absolute; inset: 52px 0 0; }
    .doc h1 { margin: 0; position: absolute; left: 28px; top: -2px; font: 400 96px/130px Lato, sans-serif; letter-spacing: -0.4px; color: #333; white-space: nowrap; }
    .doc h2 { margin: 0; position: absolute; left: 28px; top: 133px; font: 400 26px/34px Lato, sans-serif; color: #333; white-space: nowrap; }
    .doc p { margin: 0; position: absolute; left: 28px; top: 175px; font: 26px/30px Lato, sans-serif; color: #808080; white-space: pre; }
    .help .patcher { flex: none; width: 1210px; }
    .divide { width: 12px; background: linear-gradient(90deg, #c9c9c9, #8e8e8e); }
    .ref { flex: 1; display: flex; flex-direction: column; background: #58595a; font-family: Lato, sans-serif; }
    .ref .head { height: 68px; background: #747881; box-sizing: border-box; padding: 0 20px 0 16px; display: flex; align-items: center; font-size: 26px; color: #676c75; }
    .ref .head .search { width: 298px; margin-right: 24px; margin-top: 0; }
    .ref .head svg.close { width: 32px; height: 32px; }
    .ref .desc { height: 66px; background: #5f6061; color: #e6e6e6; font-size: 22px; line-height: 40px; padding-left: 18px; box-sizing: border-box; }
    .ref .list { flex: 1; display: flex; }
    .ref .rows { flex: 1; color: #fff; }
    .ref .args { height: 46px; display: flex; align-items: center; gap: 15px; padding-left: 18px; font-weight: 700; font-size: 23px; background: linear-gradient(#6a6b6c, #4d4e4f); }
    .ref .args i { border: solid transparent; border-width: 15px 9px 0; border-top-color: #fff; }
    .ref .arg { display: flex; padding: 11px 0 0 36px; gap: 9px; font-size: 22px; line-height: 32px; color: #e0e0e0; }
    .ref .arg span { background: #b39ccf; color: #fff; width: 28px; height: 28px; text-align: center; }
    .ref .bar { width: 30px; background: #f4f4f4; padding: 8px 6px 0 8px; box-sizing: border-box; }
    .ref .bar i { display: block; height: 400px; border-radius: 8px; background: #bdbdbd; }

    .dock { position: absolute; left: 0; top: 84px; width: 76px; height: 1675px; border-radius: 0 10px 10px 0; box-sizing: border-box; padding-top: 5px; display: flex; flex-direction: column; font-family: "Liberation Sans", sans-serif;
      background: linear-gradient(#f29d92 0, #f2a198 330px, #e8a5ab 460px, #d39eb0 560px, #a98598 660px, #746e7f 750px, #6e6e82 850px, #728ca9 960px, #7089a8 1080px, #6d7990 1140px, #6b6472 1200px, #66565b 1270px, #5f5357 1400px, #5a5254); }
    .dock .app { height: 58.500px; flex: none; display: flex; align-items: center; }
    .dock .app::before { content: ""; width: 6px; height: 6px; margin: 0 7px 0 4px; border-radius: 50%; }
    .dock .app.open::before { background: #1a0b12; }
    .dock .app.open:nth-child(-n + 6)::before { background: #6b1a1a; }
    .dock svg { width: 48px; height: 48px; overflow: visible; }
    .dock hr { width: 56px; margin: 14px 0 0 10px; border: 0; height: 2px; background: #3b3336; flex: none; }
    .dock .mini { margin: 19px 0 0 15px; width: 52px; height: 44px; flex: none; }
    .dock .trash { margin: 9px 0 0 20px; width: 42px; height: 50px; flex: none; }
  `;

  private menubar() {
    const items = ["File", "Edit", "View", "Object", "Arrange", "Options", "Debug", "Window", "Extras", "Help"];
    return html`<div class="menubar">
      <div class="menus">
        <svg width="30" height="44" viewBox="0 0 30 44"><path d="M20 4c.3 3.500-2.800 7-6 7-.4-3.300 2.700-6.800 6-7zM25.500 28.500c-1.500 3.600-4 7-6.500 7-1.700 0-2.400-1-4.600-1s-3 1-4.600 1C6 35.500 1 27.500 1 21c0-6 3.800-9.300 7.500-9.300 2.300 0 4 1.500 5.700 1.500 1.500 0 3.500-1.600 6.300-1.600 2.200 0 4.300 1.100 5.500 3-5 3-4.200 10.300 1.500 12.400z" transform="translate(0 -1)" fill="#3b2529"/></svg>
        <b>Max</b>${items.map(t => html`<span>${t}</span>`)}
      </div>
      <div class="status">
        <svg width="38" height="44" viewBox="0 0 38 44"><path d="M9.500 6L19 12l-9.500 6L0 12zM28.500 6L38 12l-9.500 6L19 12zM9.500 18l9.500 6-9.500 6L0 24zM28.500 18l9.500 6-9.500 6-9.500-6zM19 26l9 6-9 6.500-9-6.500z" fill="#4a2f33"/></svg>
        <svg width="38" height="44" viewBox="0 0 38 44"><path d="M0 22h29c-1-4 1-6 2-7 2 1 2.500 3 2.500 4.500 1.500-.3 3 0 4 .7-1 2.300-3 3-5 3C30 31 24 36 15 36 6 36 0 31 0 22zM3 17h5v4H3zM9 17h5v4H9zM15 17h5v4h-5zM21 17h5v4h-5zM9 12h5v4H9zM15 12h5v4h-5zM21 12h5v4h-5zM15 7h5v4h-5z" fill="#4a2f33"/></svg>
        <svg width="42" height="44" viewBox="0 0 42 44"><path d="M9 36a9 9 0 0 1-2-17C7 12 14 8 20 9c7 0 11 4 12 9 5 1 9 4 9 9s-4 9-9 9z" fill="#4a2f33"/><path d="M21 15l8 9h-5v7h-6v-7h-5z" fill="#f3dfe0"/></svg>
        <svg width="20" height="44" viewBox="0 0 20 44"><path d="M1 13l16 17-8 8V6l8 8L1 31" fill="none" stroke="#d3bcc2" stroke-width="2"/></svg>
        <svg width="42" height="44" viewBox="0 0 42 44"><g fill="none" stroke="#3f2a30" stroke-width="3.400"><path d="M2 17q19-18 38 0M8.500 23q12.500-12 25 0M14.500 29q6.500-6 13 0"/></g><path d="M16.500 31q4.500-4 9 0L21 36z" fill="#3f2a30"/></svg>
        <svg width="38" height="44" viewBox="0 0 38 44"><path d="M0 17a2 2 0 0 1 2-2h5l9-7v28l-9-7H2a2 2 0 0 1-2-2z" fill="#3f2a30"/><path d="M20 17q3 5 0 10M25 13q6 9 0 18M30 9.500q9 13 0 25" fill="none" stroke="#3f2a30" stroke-width="2.400"/></svg>
        <span class="level">90%</span>
        <svg width="46" height="44" viewBox="0 0 46 44"><rect x="1" y="11" width="38" height="22" rx="4" fill="none" stroke="#33262d" stroke-width="2.200"/><rect x="4.500" y="14.500" width="28" height="15" fill="#33262d"/><path d="M42 17q4 5 0 10z" fill="#33262d"/></svg>
        <span class="clock">Thu 7:52 PM</span>
        <svg width="30" height="44" viewBox="0 0 30 44"><circle cx="11.500" cy="19" r="9.500" fill="none" stroke="#2b2530" stroke-width="2.600"/><path d="M18 26l10 9.500" stroke="#2b2530" stroke-width="3.400"/></svg>
        <svg width="36" height="44" viewBox="0 0 36 44"><path d="M0 12h4v4H0zM8 12h28v4H8zM0 20h4v4H0zM8 20h22v4H8zM0 28h4v4H0zM8 28h28v4H8z" fill="#252737"/></svg>
      </div>
    </div>`;
  }

  private finder() {
    const handle = html`<div class="handle"><i></i><i></i></div>`;
    return html`<div class="win finder">
      <div class="top"></div><div class="track"></div>
      <div class="cols"><div class="lead"></div><div></div>${handle}
        <div><div class="folder-row"><i></i>work_in_progress<b></b></div></div>${handle}
        <div></div>${handle}<div></div>${handle}<div></div></div>
    </div>`;
  }

  private chrome() {
    const cross = html`<svg class="x" width="18" height="18" viewBox="0 0 18 18"><path d="M2 2l14 14M16 2L2 16" stroke="#5f6368" stroke-width="2.600"/></svg>`;
    return html`<div class="win chrome">
      <div class="strip">
        <div class="lights"><i></i><i></i><i></i></div>
        <svg class="favs" width="1480" height="20" viewBox="272 79 1480 20"><rect x="272" y="83" width="32" height="20" fill="#2f5a60"/><path d="M727 79v20M1205 79v20M1683 79v20" stroke="#9a9da1" stroke-width="2"/><circle cx="766" cy="94" r="12" fill="#d9502f"/><circle cx="766" cy="95" r="8" fill="none" stroke="#fff" stroke-width="1.500"/><circle cx="1244" cy="95" r="13" fill="#24292e"/><circle cx="1722" cy="95" r="13" fill="#24292e"/></svg>
        ${cross}
        <div class="tab"><span>New Tab</span><svg width="18" height="18" viewBox="0 0 18 18"><path d="M2 2l14 14M16 2L2 16" stroke="#5f6368" stroke-width="2.600"/></svg></div>
        <svg class="add" width="24" height="24" viewBox="0 0 24 24"><path d="M12 0v24M0 12h24" stroke="#5f6368" stroke-width="3.200"/></svg>
      </div>
      <div class="addr"><div class="omni"></div>
        <div class="ext">
          <svg viewBox="0 0 32 32"><rect x="1.500" y="1.500" width="29" height="29" fill="#dfe8f4" stroke="#3d5c8f" stroke-width="3"/><path d="M6 11q2-4 6-4h15M12 8q0 12-4 17M20 8q-1 15 1 17 3 1 4-3" fill="none" stroke="#3d5c8f" stroke-width="2.800"/></svg>
          <svg viewBox="0 0 32 32"><path d="M11 2h10l11 19-5 9H5l-5-9z" fill="#b9b9b9"/><path d="M11 2h10l11 19H21z" fill="#d3d3d3"/><path d="M16 12l5.500 9.500h-11z" fill="#fff"/></svg>
          <svg viewBox="0 0 32 32"><rect x="1" y="1" width="30" height="30" rx="3" fill="#f0db4f" stroke="#222" stroke-width="1.600"/><rect x="4" y="4" width="16" height="8" rx="4" fill="#222"/><circle cx="8" cy="8" r="3" fill="#fff"/><text x="8" y="28" font-size="17" font-weight="700" fill="#222">JS</text></svg>
          <svg viewBox="0 0 32 32"><path d="M4 24l-1-12 5 3 1-7 4 4 2-12 5 12 4-5 1 8 5-2-2 11z" fill="#8f8f8f"/><path d="M9 17l4 2M22 17l-4 2" stroke="#222" stroke-width="3"/><rect x="7" y="20" width="36" height="24" rx="4" fill="#ff8a21"/><text x="25" y="39" font-size="21" font-weight="500" fill="#fff" text-anchor="middle">off</text></svg>
          <svg viewBox="0 0 32 32"><circle cx="16" cy="16" r="14.500" fill="#c5bfba" stroke="#222" stroke-width="2.800"/><path d="M7 10l5 13 4-12 4 12 5-13" fill="none" stroke="#222" stroke-width="2.600"/></svg>
          <svg viewBox="0 0 32 32"><circle cx="16" cy="16" r="16" fill="#de5833"/><path d="M9 6q9-4 12 6l1 9-4 9h-6z" fill="#fff"/><path d="M16 17l12-2-3 6-8 2z" fill="#fdd20a"/><circle cx="15" cy="11" r="1.800" fill="#2d4f8e"/><path d="M13 25l8 0-1 6-7-1z" fill="#5bb24a"/></svg>
        </div>
        <div class="bar"></div><div class="avatar">G</div><div class="dots"><i></i><i></i><i></i></div>
      </div>
      <div class="marks"><div class="apps"><i></i><i></i><i></i></div><div class="last">to a lo poeta</div><span>»</span><div class="sep"></div>
        <svg width="32" height="26" viewBox="0 0 32 26"><path d="M1.500 24V3a1.500 1.500 0 0 1 1.500-1.500h9l3 4h15A1.500 1.500 0 0 1 31 7v17z" fill="#fff" stroke="#444" stroke-width="2.200"/><path d="M2.500 9h27v14h-27z" fill="#c4c4c4"/><path d="M2 8h28" stroke="#444" stroke-width="1.800"/></svg><span>Other Bookmarks</span></div>
      <div class="page"><p>guille</p></div>
    </div>`;
  }

  private toolbar() {
    return html`<div class="toolbar">
      <div class="zoom">100%<i></i></div>
      <div class="tools">${TOOLS.map(([n, more]) => html`<div>${glyph(n, "tool")}${more ? html`<b></b>` : nothing}</div>`)}</div>
      <div class="paint">${glyph("paint", "tool")}</div>
      <div class="search">${magnifier}</div>
    </div>`;
  }

  private left() {
    return html`<div class="left">${LEFT.map(n => glyph(n, n === "cube" ? "lime" : DIM_LEFT.has(n) ? "dim" : ""))}</div>`;
  }

  private bottom(power: boolean) {
    return html`<div class="bottom">
      ${BOTTOM.map(n => glyph(n, n === "grid" || n === "clipadd" ? "dim" : ""))}
      ${power ? html`<svg class="power" viewBox="0 0 34 36"><path d="M9 10a12 12 0 1 0 16 0" fill="none" stroke="#72dcff" stroke-width="4.600" stroke-linecap="round"/><path d="M17 4v15" stroke="#72dcff" stroke-width="4.800" stroke-linecap="round"/></svg>` : nothing}
    </div>`;
  }

  private helpWindow() {
    const tabs: [string, number][] = [["basic", 122], ["tempo-relative", 239], ["vector-offset", 218], ["?", 104]];
    return html`<div class="win max help">
      <div class="title"><div class="lights"><i></i><i></i><i></i></div><div class="name">${fileIcon}<span>snapshot~.maxhelp</span></div></div>
      <div class="cols2">
        <div class="patcher">
          ${this.toolbar()}${this.left()}
          <div class="canvas doc">
            <div class="tabs">${tabs.map(([t, w]) => html`<div style=${styleMap({ width: `${w}px` })}>${t}</div>`)}</div>
            <div class="sheet">
              <h1>snapshot~</h1>
              <h2>Convert signal values to numbers</h2>
              <p>Use the snapshot~ object to convert a signal value into a float message when a
bang is received or according to a specified interval. The interval can be set
to a fixed or tempo-relative rate using the Max time format syntax.</p>
              <patch-canvas .nodes=${HELP_NODES} .cords=${HELP_CORDS} .ox=${200} .oy=${252} .size=${26}></patch-canvas>
            </div>
          </div>
          <div class="right">${launchpad()}</div>
          ${this.bottom(false)}
        </div>
        <div class="divide"></div>
        <div class="ref">
          <div class="head"><b>snapshot~</b>&nbsp;reference<div class="search">${magnifier}</div>
            <svg class="close" viewBox="0 0 32 32"><circle cx="16" cy="16" r="16" fill="#838888"/><path d="M10 10l12 12M22 10L10 22" stroke="#70747b" stroke-width="4"/></svg></div>
          <div class="desc">Convert signal values to numbers</div>
          <div class="list"><div class="rows">
            <div class="args"><i></i>Arguments</div>
            <div class="arg"><span>A</span><div><b>reporting-interval:</b> Set the reporting interval</div></div>
          </div><div class="bar"><i></i></div></div>
        </div>
      </div>
    </div>`;
  }

  private mainWindow() {
    return html`<div class="win max main">
      <div class="title"><div class="lights"><i></i><i></i><i></i></div><div class="name">${fileIcon}<span>monophonic_test_2</span></div></div>
      <div class="cols2"><div class="patcher">
        ${this.toolbar()}${this.left()}
        <div class="canvas"><patch-canvas .nodes=${MAIN_NODES} .cords=${MAIN_CORDS} .ox=${1174} .oy=${446} .size=${24}></patch-canvas></div>
        <div class="right">${launchpad()}${["info", "columns", "list", "book", "camera"].map(n => glyph(n))}
          <div class="meters"><div></div><div></div><u></u></div></div>
        ${this.bottom(true)}
      </div></div>
    </div>`;
  }

  private dock() {
    return html`<div class="dock">
      ${DOCK.map(d => html`<div class=${classMap({ app: true, open: !!d.open })}><svg viewBox="0 0 48 48">${d.art}</svg></div>`)}
      <hr>
      <svg class="mini" viewBox="0 0 52 44"><rect x="0" y="1" width="51" height="34" fill="#ece7e0"/><rect x="0" y="1" width="18" height="34" fill="#fff"/><path d="M0 1h51v3H0z" fill="#c6ccd2"/><path d="M2 7h13M2 11h11M2 15h13M2 19h10M2 23h13M2 27h11M2 31h13" stroke="#8c8c8c" stroke-width="1.500"/><path d="M37 7h10M40 13h7M20 18h8M42 22h5" stroke="#bfe5ae" stroke-width="2.500"/><circle cx="42" cy="34" r="9" fill="#f4f4f4"/><circle cx="42" cy="34" r="7.500" fill="#3bbd50"/><path d="M39 31q1 5 6 6" fill="none" stroke="#fff" stroke-width="2.400"/></svg>
      <svg class="trash" viewBox="0 0 42 50"><path d="M2 7h38l-5 40q-14 4-28 0z" fill="#d9d9db"/><ellipse cx="21" cy="7" rx="19.500" ry="4.500" fill="#aaa" stroke="#f0f0f0"/><path d="M7 7l5-5 6 3 6-4 6 4 5 1-5 3H10z" fill="#fafafa"/><path d="M12 12l3 34M21 13v35M30 12l-3 34" stroke="#c2c2c5" stroke-width="1"/></svg>
    </div>`;
  }

  render() {
    return html`${this.menubar()}${this.finder()}${this.chrome()}${this.helpWindow()}${this.mainWindow()}${this.dock()}`;
  }
}
customElements.define("app-root", AppRoot);
